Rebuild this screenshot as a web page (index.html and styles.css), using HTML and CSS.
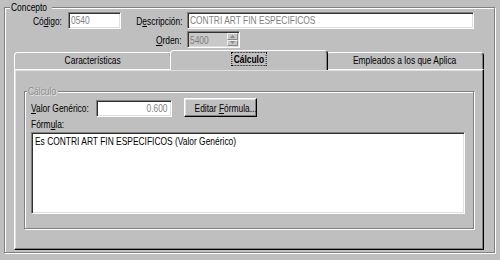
FILE: index.html
```html
<!DOCTYPE html>
<html lang="es">
<head>
<meta charset="utf-8">
<title>Concepto</title>
<link rel="stylesheet" href="styles.css">
</head>
<body>
<div class="win">
  <fieldset class="group concepto">
    <legend><span class="t">Concepto</span></legend>
    <div class="fields">
      <label class="lbl"><span class="t r">Có<u>d</u>igo:</span></label>
      <div class="input sunken dis code"><span class="t">0540</span></div>
      <label class="lbl lbl-desc"><span class="t r">D<u>e</u>scripción:</span></label>
      <div class="input sunken dis desc"><span class="t">CONTRI ART FIN ESPECIFICOS</span></div>
      <label class="lbl orden-lbl"><span class="t r"><u>O</u>rden:</span></label>
      <div class="input sunken dis orden">
        <span class="t orden-val">5400</span>
        <div class="spin">
          <div class="spin-btn"><svg width="5" height="3" viewBox="0 0 5 3"><path d="M2.5 0 L5 3 L0 3 Z" fill="#8a8a8a"/></svg></div>
          <div class="spin-btn"><svg width="5" height="3" viewBox="0 0 5 3"><path d="M0 0 L5 0 L2.5 3 Z" fill="#8a8a8a"/></svg></div>
        </div>
      </div>
    </div>
    <div class="tabctl">
      <div class="tabs">
        <div class="tab"><span class="t c">Características</span></div>
        <div class="tab active"><span class="t c focus">Cálculo</span></div>
        <div class="tab"><span class="t c">Empleados a los que Aplica</span></div>
      </div>
      <div class="panel">
        <fieldset class="group calc">
          <legend><span class="t">Cálculo</span></legend>
          <div class="valrow">
            <label class="vlbl"><span class="t"><u>V</u>alor Genérico:</span></label>
            <div class="input sunken dis valor"><span class="t r">0.600</span></div>
            <button class="btn" type="button"><span class="t c">Editar <u>F</u>órmula...</span></button>
          </div>
          <label class="flbl"><span class="t">Fórm<u>u</u>la:</span></label>
          <div class="input sunken formula"><span class="t">Es CONTRI ART FIN ESPECIFICOS (Valor Genérico)</span></div>
        </fieldset>
      </div>
    </div>
  </fieldset>
</div>
</body>
</html>
```
FILE: styles.css
```css
html, body {
  margin: 0;
  padding: 0;
  background: #bfbfbf;
}
body {
  font-family: "Liberation Sans", Arial, sans-serif;
  font-size: 11px;
  color: #000;
}
u { text-decoration: underline; text-underline-offset: 1px; }

/* narrow system font look: Arial metrics condensed horizontally */
.t {
  display: inline-block;
  white-space: nowrap;
  transform: scaleX(0.765);
  transform-origin: left center;
}
.t.r { transform-origin: right center; }
.t.c { transform-origin: center center; }

.win {
  width: 500px;
  height: 260px;
  box-sizing: border-box;
  padding: 0 5px 7px 4px;
  display: flex;
}

.group {
  margin: 0;
  min-width: 0;
  border: 1px solid #808080;
  box-shadow: 1px 1px 0 #fff, inset 1px 1px 0 #fff;
}
.group > legend {
  padding: 0 1px;
  line-height: 14px;
  background: #bfbfbf;
  box-sizing: border-box;
  white-space: nowrap;
}

.concepto {
  flex: 1;
  padding: 0 10px 0 6px;
}
.concepto > legend {
  margin-left: -1px;
  width: 42px;
}

.fields {
  margin-top: -2px;
  display: grid;
  grid-template-columns: 57px 53px 66px 1fr;
  grid-auto-rows: 17px;
  row-gap: 2px;
  padding-right: 10px;
  align-items: center;
}
.lbl {
  text-align: right;
  padding-right: 6px;
  white-space: nowrap;
}
.lbl-desc, .orden-lbl { padding-right: 4px; }
.orden-lbl { grid-column: 3; padding-right: 5px; }

.input {
  box-sizing: border-box;
  height: 17px;
  background: #fff;
  line-height: 13px;
  padding: 0 2px;
  white-space: nowrap;
  overflow: hidden;
}
.sunken {
  border: 1px solid;
  border-color: #808080 #fff #fff #808080;
  box-shadow: inset 1px 1px 0 #303030, inset -1px -1px 0 #dfdfdf;
  padding-top: 1px;
}
.dis { color: #7f7f7f; }
.orden {
  grid-column: 4;
  width: 53px;
  background: #c9c9c9;
  display: flex;
  justify-content: space-between;
  padding: 1px 1px 1px 2px;
}
.orden-val { padding-top: 1px; }
.spin {
  display: flex;
  flex-direction: column;
  width: 11px;
}
.spin-btn {
  flex: 1;
  box-sizing: border-box;
  background: #c6c6c6;
  border: 1px solid;
  border-color: #efefef #8a8a8a #8a8a8a #efefef;
  display: flex;
  align-items: center;
  justify-content: center;
}

.tabctl {
  margin: 2px 0 0 3px;
}
.tabs {
  display: flex;
  align-items: flex-end;
  height: 19px;
}
.tab {
  flex: 1 1 0;
  box-sizing: border-box;
  height: 17px;
  border: 1px solid;
  border-bottom: 0;
  border-color: #fff #000 #000 #fff;
  border-radius: 4px 4px 0 0;
  box-shadow: inset -1px 0 0 #808080;
  text-align: center;
  line-height: 15px;
  white-space: nowrap;
}
.tab.active {
  position: relative;
  z-index: 1;
  height: 20px;
  margin: 0 -2px -1px;
  background: #bfbfbf;
  font-weight: bold;
  line-height: 16px;
}
.focus {
  outline: 1px dotted #000;
  outline-offset: 0;
  padding: 0 2px;
  line-height: 12px;
}

.panel {
  box-sizing: border-box;
  height: 181px;
  border: 1px solid;
  border-color: #fff #000 #000 #fff;
  box-shadow: inset -1px -1px 0 #808080, inset 1px 1px 0 #dfdfdf;
  padding: 14px 9px 0 9px;
}

.calc {
  padding: 0 8px 14px 6px;
}
.calc > legend {
  margin-left: -4px;
  width: 31px;
  color: #8c8c8c;
  text-shadow: 1px 1px 0 #e6e6e6;
}
.valrow {
  display: flex;
  align-items: flex-end;
  height: 19px;
}
.vlbl {
  width: 65px;
  white-space: nowrap;
  align-self: center;
  padding-top: 1px;
}
.valor {
  width: 76px;
  text-align: right;
  padding-right: 3px;
}
.btn {
  margin-left: 12px;
  width: 73px;
  height: 19px;
  padding: 0;
  font: inherit;
  color: #000;
  background: #bfbfbf;
  border: 1px solid;
  border-color: #fff #000 #000 #fff;
  box-shadow: inset -1px -1px 0 #808080, inset 1px 1px 0 #dfdfdf;
  white-space: nowrap;
  overflow: visible;
}
.flbl {
  display: block;
  line-height: 14px;
  margin-bottom: 1px;
}
.formula {
  height: 82px;
  padding: 2px 3px;
}
```
